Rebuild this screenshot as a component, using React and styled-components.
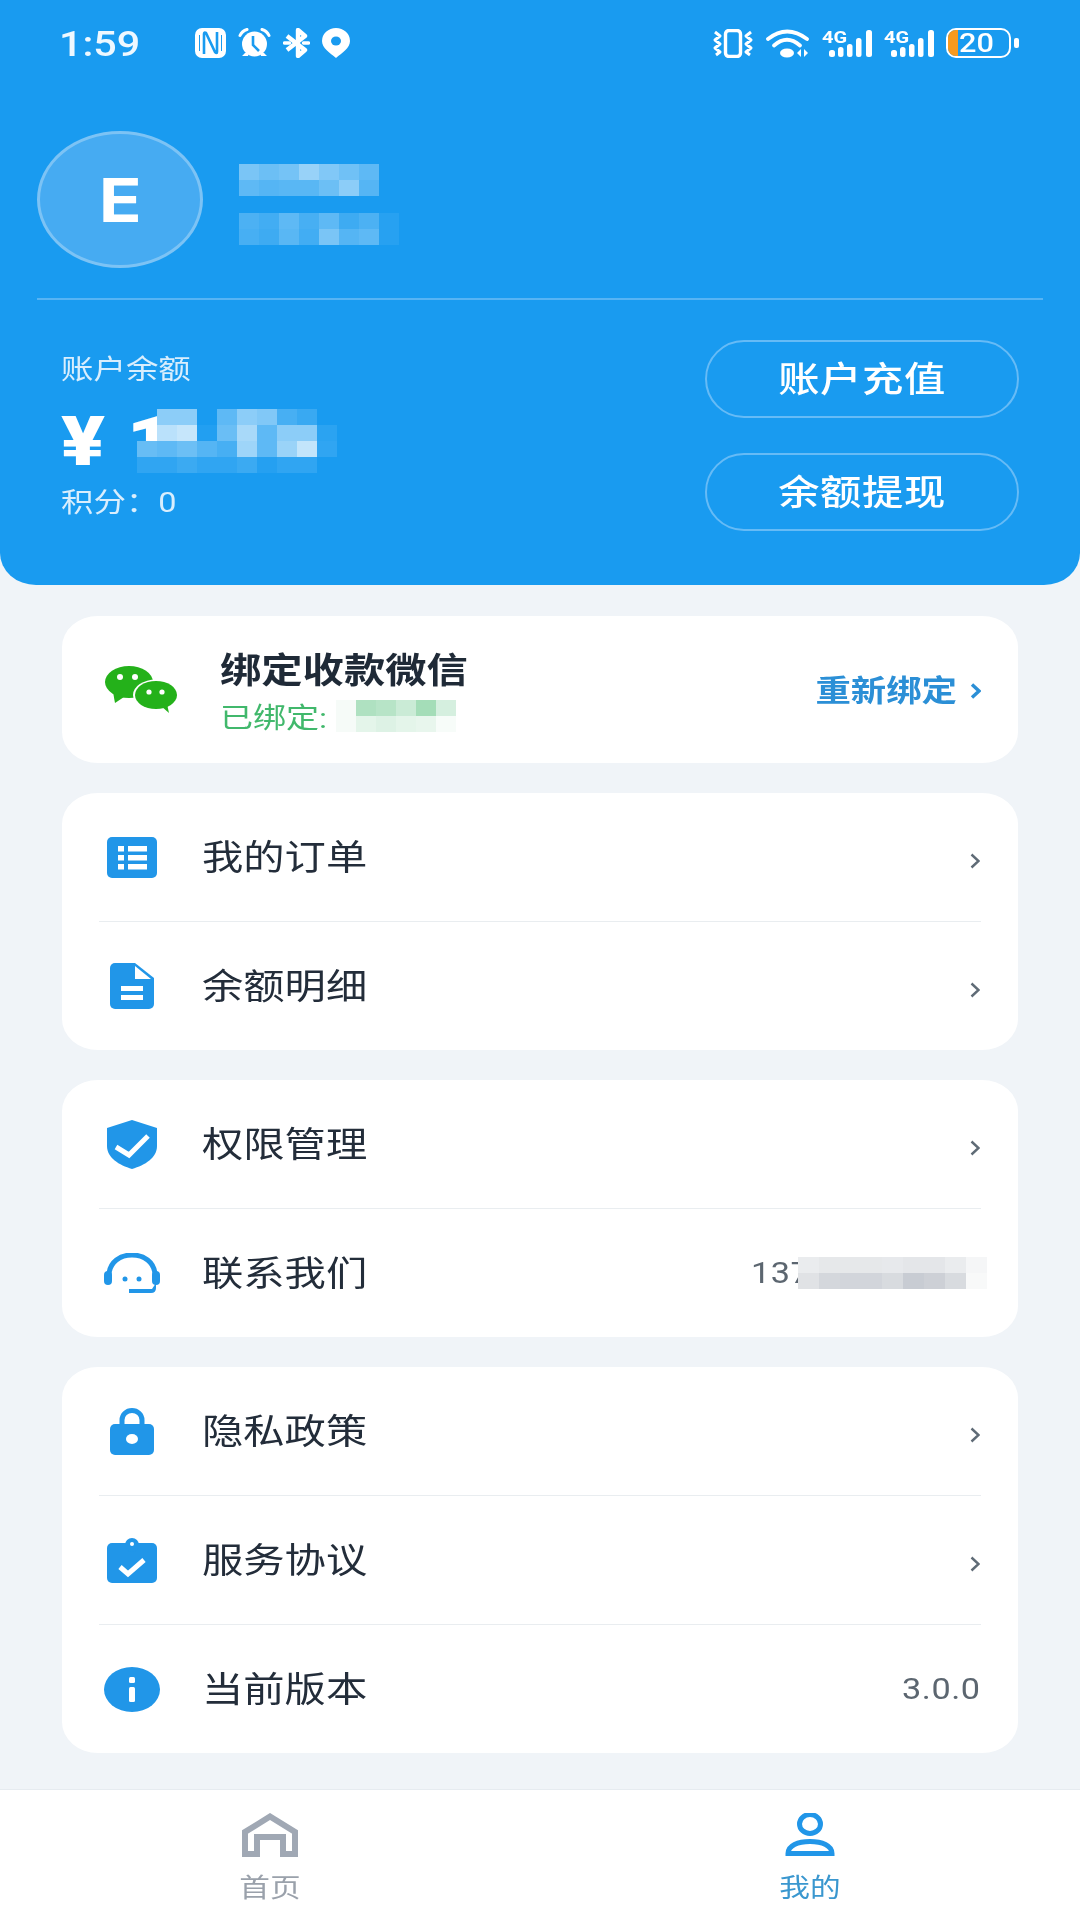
import React from 'react'
import styled, { createGlobalStyle, css } from 'styled-components'

const BLUE = '#199bf0'
const ICON = '#2196e8'

const GlobalStyle = createGlobalStyle`
  html, body {
    margin: 0;
    padding: 0;
    width: 1080px;
    height: 1920px;
    overflow: hidden;
    background: #f0f4f8;
    font-family: Roboto, "Noto Sans CJK SC", sans-serif;
  }
  * { box-sizing: border-box; }
`

// the screenshot is stretched sideways, so the text is too
const wide = (origin = 'left') => css`
  display: inline-block;
  white-space: nowrap;
  transform: scaleX(1.18);
  transform-origin: ${origin} center;
`

const Page = styled.div`
  width: 1080px;
  height: 1920px;
  display: flex;
  flex-direction: column;
  background: #f0f4f8;
`

const Header = styled.header`
  height: 585px;
  flex-shrink: 0;
  background: ${BLUE};
  border-radius: 0 0 36px 36px / 0 0 32px 32px;
  color: #fff;
`

const StatusBar = styled.div`
  height: 86px;
  padding: 0 61px 0 59px;
  display: flex;
  align-items: center;
`

const Time = styled.div`
  width: 136px;
  margin-top: 3px;
  font-size: 35px;
  font-weight: 500;
  line-height: 40px;
  color: #eef8ff;
  span { ${wide()} }
`

const StatusLeft = styled.div`
  display: flex;
  align-items: center;
  gap: 12px;
`

const StatusRight = styled.div`
  margin-left: auto;
  display: flex;
  align-items: center;
  gap: 12px;
`

const Signal = styled.div`
  position: relative;
  width: 50px;
  height: 29px;
  svg { display: block; }
`

const SignalLabel = styled.span`
  ${wide()}
  position: absolute;
  left: 0;
  top: -1px;
  font-size: 17px;
  font-weight: 700;
  line-height: 18px;
`

const Battery = styled.div`
  position: relative;
  width: 65px;
  height: 30px;
  border: 2.5px solid #fff;
  border-radius: 10px;
  overflow: hidden;
  display: flex;
  align-items: center;
  padding-left: 11px;
  font-size: 26px;
  font-weight: 500;
  line-height: 26px;
  span { ${wide()} position: relative; }
  &::before {
    content: '';
    position: absolute;
    left: 0;
    top: 0;
    bottom: 0;
    width: 10px;
    background: #f79a1e;
  }
`

const BatteryNub = styled.div`
  width: 5px;
  height: 10px;
  margin-left: -9px;
  border-radius: 2px;
  background: #fff;
`

const Profile = styled.div`
  margin-top: 45px;
  padding-left: 37px;
  display: flex;
  align-items: center;
`

const Avatar = styled.div`
  width: 166px;
  height: 137px;
  border-radius: 50%;
  background: #46abf2;
  border: 3px solid #7cc3f5;
  display: flex;
  align-items: center;
  justify-content: center;
  font-family: Inter, sans-serif;
  font-size: 60px;
  font-weight: 700;
  span { ${wide('center')} }
`

const NameBlock = styled.div`
  margin: 10px 0 0 36px;
  display: flex;
  flex-direction: column;
  gap: 17px;
`

const MosaicGrid = styled.div`
  display: grid;
  grid-template-columns: repeat(${p => p.$cols}, ${p => p.$w}px);
  grid-auto-rows: ${p => p.$h}px;
  filter: blur(0.6px);
`

const MosaicCell = styled.div`
  background: ${p => p.$a === null ? 'transparent' : `color-mix(in srgb, ${p.$tint} ${p.$a}%, ${p.$base})`};
`

const AmountMosaic = styled.div`
  position: absolute;
  left: 76px;
  top: 0;
`

const Rule = styled.div`
  height: 2px;
  margin: 30px 37px 0;
  background: #57b4f4;
`

const BalanceRow = styled.div`
  margin-top: 40px;
  padding: 0 61px;
  display: flex;
  justify-content: space-between;
`

const BalanceInfo = styled.div`
  padding-top: 12px;
`

const BalanceLabel = styled.div`
  font-size: 27.5px;
  line-height: 36px;
  color: #d9eefd;
  span { ${wide()} }
`

const Amount = styled.div`
  position: relative;
  margin: 21px 0 11px;
  height: 65px;
  font-size: 66px;
  font-weight: 900;
  line-height: 65px;
  display: flex;
`

const Yen = styled.span`
  ${wide()}
  width: 66px;
  font-size: 69px;
`

const Digit = styled.span`
  ${wide()}
`

const Actions = styled.div`
  display: flex;
  flex-direction: column;
  gap: 35px;
`

const PillButton = styled.div`
  width: 314px;
  height: 78px;
  padding-bottom: 5px;
  border: 2.5px solid #66bbf6;
  border-radius: 40px;
  display: flex;
  align-items: center;
  justify-content: center;
  font-size: 35px;
  font-weight: 500;
  letter-spacing: 0.5px;
  span { ${wide('center')} }
`

const Content = styled.main`
  flex: 1;
  padding: 31px 62px 0;
  display: flex;
  flex-direction: column;
  gap: 30px;
`

const Card = styled.section`
  background: #fff;
  border-radius: 36px / 31px;
`

const BindCard = styled(Card)`
  height: 147px;
  padding: 0 37px 0 42px;
  display: flex;
  align-items: center;
`

const BindText = styled.div`
  margin-left: 42px;
  padding-top: 4px;
`

const BindTitle = styled.div`
  font-size: 35px;
  font-weight: 700;
  line-height: 44px;
  color: #1f2a37;
  span { ${wide()} }
`

const BindSub = styled.div`
  height: 34px;
  margin-top: 5px;
  display: flex;
  align-items: center;
  font-size: 28px;
  color: #41b86c;
  span { ${wide()} width: 116px; }
`

const Rebind = styled.div`
  margin-left: auto;
  display: flex;
  align-items: center;
  gap: 13px;
  font-size: 30px;
  font-weight: 700;
  color: #2b8fd6;
  span { ${wide('right')} padding-bottom: 3px; }
  svg { margin-top: 3px; }
`

const Row = styled.div`
  height: 128px;
  margin: 0 37px;
  display: flex;
  align-items: center;
  & + & {
    height: 129px;
    border-top: 1px solid #e9edf0;
  }
`

const IconSlot = styled.div`
  width: 66px;
  margin-right: 37px;
  display: flex;
  justify-content: center;
`

const RowLabel = styled.div`
  padding-top: 3px;
  font-size: 35px;
  line-height: 44px;
  color: #232d3a;
  span { ${wide()} }
`

const RowRight = styled.div`
  margin-left: auto;
  display: flex;
  align-items: center;
`

const ChevronSlot = styled.div`
  display: flex;
  margin: 8px 1px 0 0;
`

const RowValue = styled.div`
  font-size: 29px;
  letter-spacing: 0.5px;
  color: #5c6670;
  span { ${wide('right')} }
`

const PhoneMosaic = styled.div`
  position: relative;
  z-index: 1;
  margin: 0 -6px 0 -12px;
`

const TabBar = styled.nav`
  height: 131px;
  flex-shrink: 0;
  background: #fff;
  border-top: 1px solid #e6ebf0;
  display: flex;
`

const TabItem = styled.div`
  flex: 1;
  padding-top: 23px;
  display: flex;
  flex-direction: column;
  align-items: center;
  color: ${p => p.$active ? '#3a97cf' : '#9aa1ab'};
  font-size: 26px;
  span {
    ${wide('center')}
    margin-top: 13px;
    line-height: 36px;
  }
`

const Mosaic = ({ rows, w = 20, h = 16, tint = '#ffffff', base = BLUE }) => (
  <MosaicGrid $cols={rows[0].length} $w={w} $h={h}>
    {rows.flat().map((a, i) => (
      <MosaicCell key={i} $a={a} $tint={tint} $base={base} />
    ))}
  </MosaicGrid>
)

const NfcIcon = () => (
  <svg width="31" height="30" viewBox="0 0 31 30">
    <rect width="31" height="30" rx="7" fill="#fff" />
    <path d="M9 26V6q0-2 2-1l9 19q2 2 2 0V4" fill="none" stroke={BLUE} strokeWidth="2.6" />
    <path d="M4.500 7v16M26.500 7v16" stroke={BLUE} strokeWidth="1" />
  </svg>
)

const AlarmIcon = () => (
  <svg width="33" height="30" viewBox="0 0 33 30">
    <circle cx="16.500" cy="16" r="12.500" fill="#fff" />
    <path d="M2 7.500Q4 3 9 1.500M31 7.500Q29 3 24 1.500" fill="none" stroke="#fff" strokeWidth="3" strokeLinecap="round" />
    <path d="M4 28h6l1-3H7zM29 28h-6l-1-3h4z" fill="#fff" />
    <path d="M15 8v9l6 6" fill="none" stroke={BLUE} strokeWidth="2.600" />
  </svg>
)

const BluetoothIcon = () => (
  <svg width="27" height="30" viewBox="0 0 27 30">
    <path d="M4 8l18 14-7 6V2l7 6L4 22" fill="none" stroke="#fff" strokeWidth="4.400" strokeLinejoin="round" />
    <path d="M1.500 15h5M20.500 15h5" stroke="#fff" strokeWidth="3.400" strokeLinecap="round" />
  </svg>
)

const PinIcon = () => (
  <svg width="28" height="30" viewBox="0 0 28 30">
    <path d="M14 30C8 25 0 20 0 13a14 13 0 0 1 28 0c0 7-8 12-14 17Z" fill="#fff" />
    <ellipse cx="14" cy="13" rx="5" ry="4.500" fill={BLUE} />
  </svg>
)

const VibrateIcon = () => (
  <svg width="42" height="29" viewBox="0 0 42 29" fill="none" stroke="#fff" strokeLinejoin="round">
    <rect x="13.500" y="1.500" width="15" height="26" rx="3.500" strokeWidth="3.400" />
    <path d="M3 3l5 4-5 4 5 4-5 4 5 4-4 3M39 3l-5 4 5 4-5 4 5 4-5 4 4 3" strokeWidth="3" />
  </svg>
)

const WifiIcon = () => (
  <svg width="44" height="30" viewBox="0 0 44 30" fill="none" stroke="#fff" strokeLinecap="round">
    <path d="M2 11Q21-4 41 11" strokeWidth="3.800" />
    <path d="M8 17.500Q21 6 34 17.500" strokeWidth="3.800" />
    <ellipse cx="21" cy="25" rx="7" ry="4.500" fill="#fff" stroke="none" />
    <path d="M35 21v8l-4-4zM38 21v8l4-4z" fill="#fff" stroke="none" />
  </svg>
)

const SignalIcon = () => (
  <Signal>
    <svg width="50" height="29" viewBox="0 0 50 29" fill="#fff">
      <rect x="7" y="21" width="6" height="7" rx="2.500" />
      <rect x="16" y="18" width="5.500" height="10" rx="2.500" />
      <rect x="25" y="15" width="5.500" height="13" rx="2.500" />
      <rect x="34" y="9" width="5.500" height="19" rx="2.500" />
      <rect x="44" y="1" width="6" height="27" rx="2.500" />
    </svg>
    <SignalLabel>4G</SignalLabel>
  </Signal>
)

const WechatIcon = () => (
  <svg width="74" height="50" viewBox="0 0 74 50">
    <path d="M9 27l2 11 9-6z" fill="#24b11a" />
    <ellipse cx="25" cy="17" rx="24" ry="16" fill="#24b11a" />
    <circle cx="16" cy="12" r="3" fill="#fff" />
    <circle cx="31" cy="12" r="3" fill="#fff" />
    <ellipse cx="52" cy="30" rx="23" ry="15.500" fill="#fff" />
    <path d="M57 41l8 7-2-9z" fill="#24b11a" />
    <ellipse cx="52" cy="30" rx="21" ry="14" fill="#24b11a" />
    <circle cx="45" cy="27" r="2.600" fill="#fff" />
    <circle cx="58" cy="27" r="2.600" fill="#fff" />
  </svg>
)

const ListIcon = () => (
  <svg width="50" height="41" viewBox="0 0 50 41" fill="#fff">
    <rect width="50" height="41" rx="5" fill={ICON} />
    <rect x="11" y="9" width="6" height="5.500" />
    <rect x="11" y="18" width="6" height="5.500" />
    <rect x="11" y="27" width="6" height="5.500" />
    <rect x="21" y="9" width="19" height="5.500" />
    <rect x="21" y="18" width="19" height="5.500" />
    <rect x="21" y="27" width="19" height="5.500" />
  </svg>
)

const DocIcon = () => (
  <svg width="44" height="46" viewBox="0 0 44 46">
    <path d="M5 0h20l19 15v26a5 5 0 0 1-5 5H5a5 5 0 0 1-5-5V5a5 5 0 0 1 5-5Z" fill={ICON} />
    <path d="M25 3l16 13H25z M11 23h22v5H11z M11 32h22v5H11z" fill="#fff" />
  </svg>
)

const ShieldIcon = () => (
  <svg width="50" height="49" viewBox="0 0 50 49">
    <path d="M25 0l25 8v18c0 12-12 19-25 23C12 45 0 38 0 26V8Z" fill={ICON} />
    <path d="M9 27l13 8 19-19" fill="none" stroke="#fff" strokeWidth="5" />
  </svg>
)

const HeadsetIcon = () => (
  <svg width="56" height="41" viewBox="0 0 56 41">
    <path d="M5 24v-3C6 9 16 2 28 2s22 7 23 19v3" fill="none" stroke={ICON} strokeWidth="5" />
    <rect y="18" width="8" height="14" rx="4" fill={ICON} />
    <rect x="48" y="18" width="8" height="14" rx="4" fill={ICON} />
    <path d="M52 30v5q0 5-5 5H25v-4h23z" fill={ICON} />
    <circle cx="21" cy="26" r="2.500" fill={ICON} />
    <circle cx="35" cy="26" r="2.500" fill={ICON} />
  </svg>
)

const LockIcon = () => (
  <svg width="44" height="47" viewBox="0 0 44 47">
    <path d="M12 18v-6a10 9.500 0 0 1 20 0v6" fill="none" stroke={ICON} strokeWidth="5" />
    <rect y="16" width="44" height="31" rx="5" fill={ICON} />
    <ellipse cx="22" cy="31" rx="6" ry="5" fill="#fff" />
  </svg>
)

const ClipboardIcon = () => (
  <svg width="50" height="45" viewBox="0 0 50 45">
    <rect y="5" width="50" height="40" rx="5" fill={ICON} />
    <circle cx="25" cy="7" r="7" fill={ICON} />
    <circle cx="25" cy="6" r="2" fill="#fff" />
    <path d="M13 29l8 7 16-14" fill="none" stroke="#fff" strokeWidth="5" />
  </svg>
)

const InfoIcon = () => (
  <svg width="56" height="45" viewBox="0 0 56 45">
    <ellipse cx="28" cy="22.500" rx="28" ry="22.500" fill={ICON} />
    <rect x="25" y="10" width="6" height="6" rx="1.500" fill="#fff" />
    <rect x="25" y="20" width="6" height="15" rx="1.500" fill="#fff" />
  </svg>
)

const HomeIcon = () => (
  <svg width="56" height="44" viewBox="0 0 56 44">
    <path d="M3 41V19L28 3.500 53 19v22H41V24H15v17Z" fill="none" stroke="#a0a8b4" strokeWidth="6" />
  </svg>
)

const PersonIcon = () => (
  <svg width="50" height="44" viewBox="0 0 50 44" fill="none" stroke={ICON} strokeWidth="5">
    <ellipse cx="25" cy="11" rx="10.500" ry="9.500" />
    <path d="M3 40.500c0-8 10-12 22-12s22 4 22 12Z" />
  </svg>
)

const Chevron = ({ color = '#5f6b76', weight = 2.4, w = 10, h = 16 }) => (
  <svg width={w} height={h} viewBox="0 0 10 16" fill="none" stroke={color} strokeWidth={weight}>
    <path d="M1.500 1.500L8.500 8l-7 6.500" />
  </svg>
)

const ListRow = ({ icon, label, children }) => (
  <Row>
    <IconSlot>{icon}</IconSlot>
    <RowLabel><span>{label}</span></RowLabel>
    <RowRight>{children || <ChevronSlot><Chevron /></ChevronSlot>}</RowRight>
  </Row>
)

const App = () => {
  return (
    <Page>
      <GlobalStyle />
      <Header>
        <StatusBar>
          <Time><span>1:59</span></Time>
          <StatusLeft>
            <NfcIcon />
            <AlarmIcon />
            <BluetoothIcon />
            <PinIcon />
          </StatusLeft>
          <StatusRight>
            <VibrateIcon />
            <WifiIcon />
            <SignalIcon />
            <SignalIcon />
            <Battery><span>20</span></Battery>
            <BatteryNub />
          </StatusRight>
        </StatusBar>

        <Profile>
          <Avatar><span>E</span></Avatar>
          <NameBlock>
            <Mosaic rows={[
              [42, 36, 40, 55, 45, 38, 30],
              [30, 26, 28, 28, 36, 50, 26],
            ]} />
            <Mosaic rows={[
              [22, 18, 30, 20, 30, 16, 22, 6],
              [20, 16, 28, 18, 42, 26, 30, 6],
            ]} />
          </NameBlock>
        </Profile>

        <Rule />

        <BalanceRow>
          <BalanceInfo>
            <BalanceLabel><span>账户余额</span></BalanceLabel>
            <Amount>
              <Yen>¥</Yen>
              <Digit>1</Digit>
              <AmountMosaic>
                <Mosaic rows={[
                  [null, 50, 50, 0, 30, 50, 45, 20, 14, 0],
                  [null, 70, 75, 4, 35, 62, 30, 50, 50, 8],
                  [34, 30, 36, 26, 20, 58, 30, 56, 74, 10],
                  [10, 10, 15, 10, 10, 15, 5, 10, 10, 0],
                ]} />
              </AmountMosaic>
            </Amount>
            <BalanceLabel><span>积分：0</span></BalanceLabel>
          </BalanceInfo>
          <Actions>
            <PillButton><span>账户充值</span></PillButton>
            <PillButton><span>余额提现</span></PillButton>
          </Actions>
        </BalanceRow>
      </Header>

      <Content>
        <BindCard>
          <WechatIcon />
          <BindText>
            <BindTitle><span>绑定收款微信</span></BindTitle>
            <BindSub>
              <span>已绑定:</span>
              <Mosaic
                tint="#41b86c"
                base="#ffffff"
                rows={[
                  [5, 42, 38, 28, 48, 22],
                  [5, 14, 18, 14, 12, 4],
                ]}
              />
            </BindSub>
          </BindText>
          <Rebind>
            <span>重新绑定</span>
            <Chevron color="#2b8fd6" weight={3.4} w={11} h={16} />
          </Rebind>
        </BindCard>

        <Card>
          <ListRow icon={<ListIcon />} label="我的订单" />
          <ListRow icon={<DocIcon />} label="余额明细" />
        </Card>

        <Card>
          <ListRow icon={<ShieldIcon />} label="权限管理" />
          <ListRow icon={<HeadsetIcon />} label="联系我们">
            <RowValue><span>137</span></RowValue>
            <PhoneMosaic>
              <Mosaic
                w={21}
                h={16}
                tint="#b9bec6"
                base="#ffffff"
                rows={[
                  [30, 36, 36, 36, 34, 38, 38, 30, 14],
                  [45, 62, 64, 64, 56, 78, 72, 56, 10],
                ]}
              />
            </PhoneMosaic>
          </ListRow>
        </Card>

        <Card>
          <ListRow icon={<LockIcon />} label="隐私政策" />
          <ListRow icon={<ClipboardIcon />} label="服务协议" />
          <ListRow icon={<InfoIcon />} label="当前版本">
            <RowValue><span>3.0.0</span></RowValue>
          </ListRow>
        </Card>
      </Content>

      <TabBar>
        <TabItem>
          <HomeIcon />
          <span>首页</span>
        </TabItem>
        <TabItem $active>
          <PersonIcon />
          <span>我的</span>
        </TabItem>
      </TabBar>
    </Page>
  )
}

export default App
